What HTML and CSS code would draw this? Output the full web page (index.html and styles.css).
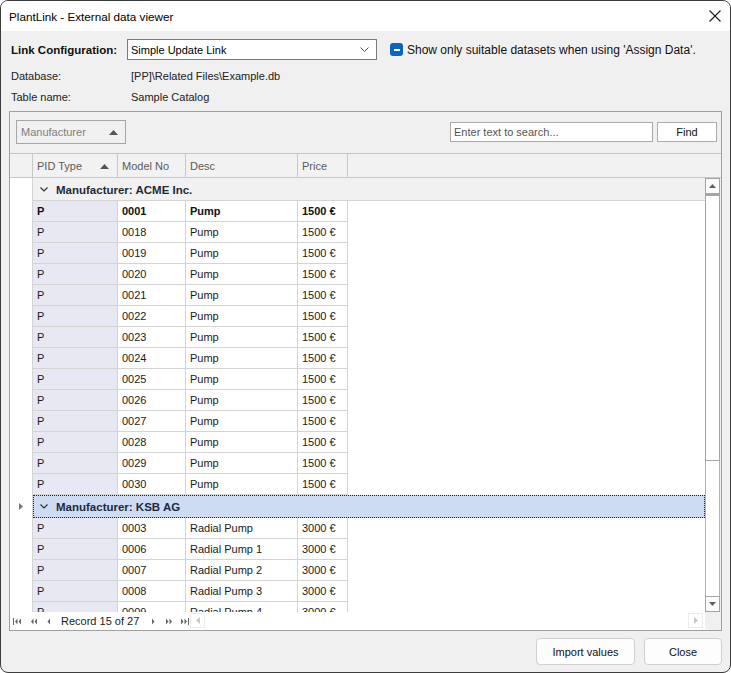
FILE: index.html
```html
<!DOCTYPE html>
<html>
<head>
<meta charset="utf-8">
<link rel="stylesheet" href="styles.css">
</head>
<body>
<div class="window">
  <div class="titlebar">
    <span class="title">PlantLink - External data viewer</span>
    <svg class="close-x" width="12" height="12" viewBox="0 0 12 12"><path d="M0.5 0.5 L11.5 11.5 M11.5 0.5 L0.5 11.5" stroke="#1a1a1a" stroke-width="1.1" fill="none"/></svg>
  </div>
  <div class="content">
    <div class="config-row">
      <span class="cfg-label">Link Configuration:</span>
      <div class="combo">
        <span>Simple Update Link</span>
        <svg class="chev" width="9" height="5" viewBox="0 0 9 5"><path d="M0.5 0.5 L4.5 4.5 L8.5 0.5" stroke="#555" stroke-width="1" fill="none"/></svg>
      </div>
      <div class="check">
        <span class="check-box"><span class="check-dash"></span></span>
        <span class="check-text">Show only suitable datasets when using 'Assign Data'.</span>
      </div>
    </div>
    <div class="info-row first"><span class="info-label">Database:</span><span>[PP]\Related Files\Example.db</span></div>
    <div class="info-row"><span class="info-label">Table name:</span><span>Sample Catalog</span></div>

    <div class="grid">
      <div class="group-panel">
        <div class="group-chip">
          <span>Manufacturer</span>
          <svg width="9" height="5" viewBox="0 0 9 5"><path d="M0 5 L4.5 0 L9 5 Z" fill="#555"/></svg>
        </div>
        <div class="search">
          <div class="search-box">Enter text to search...</div>
          <div class="find-btn">Find</div>
        </div>
      </div>
      <div class="header">
        <div class="hcell ind"></div>
        <div class="hcell sorted"><span>PID Type</span><svg width="9" height="5" viewBox="0 0 9 5"><path d="M0 5 L4.5 0 L9 5 Z" fill="#555"/></svg></div>
        <div class="hcell">Model No</div>
        <div class="hcell">Desc</div>
        <div class="hcell">Price</div>
        <div class="hcell fill"></div>
      </div>
      <div class="data-area">
        <div class="rows">
          <div class="group-row">
            <div class="ind"></div>
            <div class="group-cell"><svg class="gchev" width="8" height="5" viewBox="0 0 8 5"><path d="M0.5 0.5 L4 4 L7.5 0.5" stroke="#333" stroke-width="1.2" fill="none"/></svg><span>Manufacturer: ACME Inc.</span></div>
          </div>
          <div class="row bold"><div class="ind"></div><div class="c pid">P</div><div class="c">0001</div><div class="c">Pump</div><div class="c">1500 €</div><div class="fill"></div></div>
          <div class="row"><div class="ind"></div><div class="c pid">P</div><div class="c">0018</div><div class="c">Pump</div><div class="c">1500 €</div><div class="fill"></div></div>
          <div class="row"><div class="ind"></div><div class="c pid">P</div><div class="c">0019</div><div class="c">Pump</div><div class="c">1500 €</div><div class="fill"></div></div>
          <div class="row"><div class="ind"></div><div class="c pid">P</div><div class="c">0020</div><div class="c">Pump</div><div class="c">1500 €</div><div class="fill"></div></div>
          <div class="row"><div class="ind"></div><div class="c pid">P</div><div class="c">0021</div><div class="c">Pump</div><div class="c">1500 €</div><div class="fill"></div></div>
          <div class="row"><div class="ind"></div><div class="c pid">P</div><div class="c">0022</div><div class="c">Pump</div><div class="c">1500 €</div><div class="fill"></div></div>
          <div class="row"><div class="ind"></div><div class="c pid">P</div><div class="c">0023</div><div class="c">Pump</div><div class="c">1500 €</div><div class="fill"></div></div>
          <div class="row"><div class="ind"></div><div class="c pid">P</div><div class="c">0024</div><div class="c">Pump</div><div class="c">1500 €</div><div class="fill"></div></div>
          <div class="row"><div class="ind"></div><div class="c pid">P</div><div class="c">0025</div><div class="c">Pump</div><div class="c">1500 €</div><div class="fill"></div></div>
          <div class="row"><div class="ind"></div><div class="c pid">P</div><div class="c">0026</div><div class="c">Pump</div><div class="c">1500 €</div><div class="fill"></div></div>
          <div class="row"><div class="ind"></div><div class="c pid">P</div><div class="c">0027</div><div class="c">Pump</div><div class="c">1500 €</div><div class="fill"></div></div>
          <div class="row"><div class="ind"></div><div class="c pid">P</div><div class="c">0028</div><div class="c">Pump</div><div class="c">1500 €</div><div class="fill"></div></div>
          <div class="row"><div class="ind"></div><div class="c pid">P</div><div class="c">0029</div><div class="c">Pump</div><div class="c">1500 €</div><div class="fill"></div></div>
          <div class="row"><div class="ind"></div><div class="c pid">P</div><div class="c">0030</div><div class="c">Pump</div><div class="c">1500 €</div><div class="fill"></div></div>
          <div class="group-row focused">
            <div class="ind"><svg width="4" height="7" viewBox="0 0 4 7"><path d="M0 0 L4 3.5 L0 7 Z" fill="#777"/></svg></div>
            <div class="group-cell"><svg class="gchev" width="8" height="5" viewBox="0 0 8 5"><path d="M0.5 0.5 L4 4 L7.5 0.5" stroke="#333" stroke-width="1.2" fill="none"/></svg><span>Manufacturer: KSB AG</span></div>
          </div>
          <div class="row"><div class="ind"></div><div class="c pid">P</div><div class="c">0003</div><div class="c">Radial Pump</div><div class="c">3000 €</div><div class="fill"></div></div>
          <div class="row"><div class="ind"></div><div class="c pid">P</div><div class="c">0006</div><div class="c">Radial Pump 1</div><div class="c">3000 €</div><div class="fill"></div></div>
          <div class="row"><div class="ind"></div><div class="c pid">P</div><div class="c">0007</div><div class="c">Radial Pump 2</div><div class="c">3000 €</div><div class="fill"></div></div>
          <div class="row"><div class="ind"></div><div class="c pid">P</div><div class="c">0008</div><div class="c">Radial Pump 3</div><div class="c">3000 €</div><div class="fill"></div></div>
          <div class="row"><div class="ind"></div><div class="c pid">P</div><div class="c">0009</div><div class="c">Radial Pump 4</div><div class="c">3000 €</div><div class="fill"></div></div>
        </div>
        <div class="vscroll">
          <div class="sb-btn"><svg width="7" height="4" viewBox="0 0 7 4"><path d="M0 4 L3.5 0 L7 4 Z" fill="#606060"/></svg></div>
          <div class="sb-thumb"></div>
          <div class="sb-track"></div>
          <div class="sb-btn"><svg width="7" height="4" viewBox="0 0 7 4"><path d="M0 0 L3.5 4 L7 0 Z" fill="#606060"/></svg></div>
        </div>
      </div>
      <div class="nav">
        <div class="nav-part">
          <svg class="nv first" width="8" height="7" viewBox="0 0 8 7"><rect x="0" y="0" width="1" height="7" fill="#666"/><path d="M4.5 0.5 L2 3.5 L4.5 6.5 Z M8 0.5 L5.5 3.5 L8 6.5 Z" fill="#666"/></svg>
          <svg class="nv pp" width="7" height="7" viewBox="0 0 7 7"><path d="M3.5 0.5 L1 3.5 L3.5 6.5 Z M7 0.5 L4.5 3.5 L7 6.5 Z" fill="#666"/></svg>
          <svg class="nv p" width="3" height="7" viewBox="0 0 3 7"><path d="M3 0.5 L0.5 3.5 L3 6.5 Z" fill="#666"/></svg>
          <span class="record">Record 15 of 27</span>
          <svg class="nv n" width="3" height="7" viewBox="0 0 3 7"><path d="M0 0.5 L2.5 3.5 L0 6.5 Z" fill="#666"/></svg>
          <svg class="nv np" width="7" height="7" viewBox="0 0 7 7"><path d="M0 0.5 L2.5 3.5 L0 6.5 Z M3.5 0.5 L6 3.5 L3.5 6.5 Z" fill="#666"/></svg>
          <svg class="nv last" width="8" height="7" viewBox="0 0 8 7"><path d="M0 0.5 L2.5 3.5 L0 6.5 Z M3.5 0.5 L6 3.5 L3.5 6.5 Z" fill="#666"/><rect x="7" y="0" width="1" height="7" fill="#666"/></svg>
        </div>
        <div class="hscroll">
          <div class="hs-btn"><svg width="4" height="7" viewBox="0 0 4 7"><path d="M4 0 L0 3.5 L4 7 Z" fill="#c8c8c8"/></svg></div>
          <div class="hs-btn"><svg width="4" height="7" viewBox="0 0 4 7"><path d="M0 0 L4 3.5 L0 7 Z" fill="#c8c8c8"/></svg></div>
        </div>
        <div class="corner"></div>
      </div>
    </div>

    <div class="buttons">
      <div class="btn import">Import values</div>
      <div class="btn close">Close</div>
    </div>
  </div>
</div>
</body>
</html>
```

FILE: styles.css
```css
* { box-sizing: border-box; }
html, body { margin: 0; padding: 0; background: #ffffff; }
body {
  font-family: "Liberation Sans", Arial, sans-serif;
  font-size: 11px;
  color: #1a1a1a;
}
.window {
  width: 731px;
  height: 673px;
  border: 1px solid #3c3c3c;
  border-radius: 8px;
  overflow: hidden;
  display: flex;
  flex-direction: column;
  background: #f0f0f0;
}
.titlebar {
  height: 30px;
  flex: none;
  background: #ffffff;
  display: flex;
  align-items: center;
  justify-content: space-between;
  padding: 0 9px 0 8px;
}
.title { font-size: 11.7px; color: #000; }
.close-x { display: block; }

.content {
  flex: 1;
  display: flex;
  flex-direction: column;
  padding: 0 8px;
}

.config-row {
  margin-top: 8px;
  height: 21px;
  display: flex;
  align-items: center;
}
.cfg-label {
  width: 118px;
  padding-left: 2px;
  font-weight: bold;
  font-size: 11.5px;
  color: #111;
}
.combo {
  width: 250px;
  height: 21px;
  border: 1px solid #7a7a7a;
  background: #fff;
  display: flex;
  align-items: center;
  justify-content: space-between;
  padding: 0 7px 0 3px;
  color: #000;
}
.check {
  margin-left: 13px;
  display: flex;
  align-items: center;
  color: #111;
}
.check-text { font-size: 12px; }
.check-box {
  width: 13px;
  height: 13px;
  border-radius: 3px;
  background: #0a64c2;
  display: flex;
  align-items: center;
  justify-content: center;
  margin-right: 4px;
}
.check-dash { width: 6px; height: 2px; background: #fff; }

.info-row {
  height: 21px;
  display: flex;
  align-items: center;
  color: #222;
}
.info-row.first { margin-top: 5px; }
.info-label { width: 122px; padding-left: 2px; }

.grid {
  margin-top: 4px;
  height: 520px;
  border: 1px solid #a0a0a0;
  display: flex;
  flex-direction: column;
  background: #fff;
}
.group-panel {
  height: 42px;
  flex: none;
  background: #f0f0f0;
  border-bottom: 1px solid #c4c4c4;
  display: flex;
  justify-content: space-between;
  align-items: flex-start;
  padding: 0 4px 0 6px;
}
.group-chip {
  margin-top: 8px;
  width: 110px;
  height: 24px;
  border: 1px solid #a6a6a6;
  display: flex;
  align-items: center;
  justify-content: space-between;
  padding: 0 7px 0 4px;
  color: #808080;
}
.search { margin-top: 10px; display: flex; gap: 4px; }
.search-box {
  width: 203px;
  height: 20px;
  border: 1px solid #a8a8a8;
  background: #fff;
  padding-left: 3px;
  line-height: 18px;
  color: #555;
}
.find-btn {
  width: 60px;
  height: 20px;
  border: 1px solid #adadad;
  background: #fff;
  text-align: center;
  line-height: 18px;
  color: #111;
}

.header {
  height: 24px;
  flex: none;
  display: grid;
  grid-template-columns: 23px 85px 68px 112px 50px 1fr;
  background: #f2f2f2;
  border-bottom: 1px solid #c8c8c8;
}
.hcell {
  border-right: 1px solid #c8c8c8;
  padding-left: 4px;
  padding-top: 1px;
  display: flex;
  align-items: center;
  color: #5a5a5a;
}
.hcell.ind { padding: 0; }
.hcell.fill { border-right: none; }
.hcell.sorted { justify-content: space-between; padding-right: 8px; }

.data-area {
  height: 434px;
  flex: none;
  display: flex;
  overflow: hidden;
}
.rows { flex: 1; overflow: hidden; background: #fff; }
.row {
  display: grid;
  grid-template-columns: 23px 85px 68px 112px 50px 1fr;
  height: 21px;
}
.row .ind { border-right: 1px solid #d4d4d4; }
.row .c {
  border-right: 1px solid #d4d4d4;
  border-bottom: 1px solid #d4d4d4;
  padding-left: 4px;
  line-height: 20px;
  white-space: nowrap;
  color: #1a1a1a;
}
.row .c.pid { background: #e8e8f3; }
.row.bold .c { font-weight: bold; color: #111; }

.group-row {
  display: grid;
  grid-template-columns: 23px 1fr;
  height: 23px;
}
.group-row .ind {
  border-right: 1px solid #d4d4d4;
  display: flex;
  align-items: center;
  justify-content: center;
}
.group-cell {
  background: #f1f1f1;
  border-bottom: 1px solid #d4d4d4;
  display: flex;
  align-items: center;
  padding-left: 7px;
  padding-top: 1px;
  font-weight: bold;
  font-size: 11.5px;
  color: #1e2a3a;
}
.gchev { margin-right: 8px; }
.group-row.focused .group-cell {
  background: #cddbf3;
  outline: 1px dotted #222;
  outline-offset: -1px;
}

.vscroll {
  width: 16px;
  flex: none;
  display: flex;
  flex-direction: column;
  padding-right: 1px;
  background: #f0f0f0;
}
.sb-btn {
  height: 16px;
  border: 1px solid #a4a4a4;
  background: #fbfbfb;
  display: flex;
  align-items: center;
  justify-content: center;
}
.sb-thumb {
  height: 267px;
  border: 1px solid #a4a4a4;
  border-top: 2px solid #a4a4a4;
  background: #fff;
}
.sb-track {
  flex: 1;
  background: #fff;
  border-left: 1px solid #b4b4b4;
  border-right: 1px solid #b4b4b4;
}

.nav {
  height: 18px;
  flex: none;
  display: flex;
  background: #fff;
}
.nav-part {
  display: flex;
  align-items: center;
  padding-left: 3px;
  width: 180px;
  flex: none;
}
.nv { display: block; flex: none; }
.nv.pp { margin-left: 9px; }
.nv.p { margin-left: 10px; }
.record { margin-left: 11px; width: 91px; color: #1a1a1a; white-space: nowrap; }
.nv.np { margin-left: 11px; }
.nv.last { margin-left: 8px; }
.hscroll {
  flex: 1;
  display: flex;
  justify-content: space-between;
  padding: 1px 2px 2px 0;
}
.hs-btn {
  width: 15px;
  height: 15px;
  border: 1px solid #ececec;
  display: flex;
  align-items: center;
  justify-content: center;
}
.corner { width: 16px; flex: none; background: #f0f0f0; }

.buttons {
  margin-top: 7px;
  display: flex;
  justify-content: flex-end;
  gap: 9px;
}
.btn {
  height: 27px;
  border: 1px solid #d0d0d0;
  border-radius: 4px;
  background: #fdfdfd;
  display: flex;
  align-items: center;
  justify-content: center;
  color: #111;
}
.btn.import { width: 99px; }
.btn.close { width: 78px; }
```
